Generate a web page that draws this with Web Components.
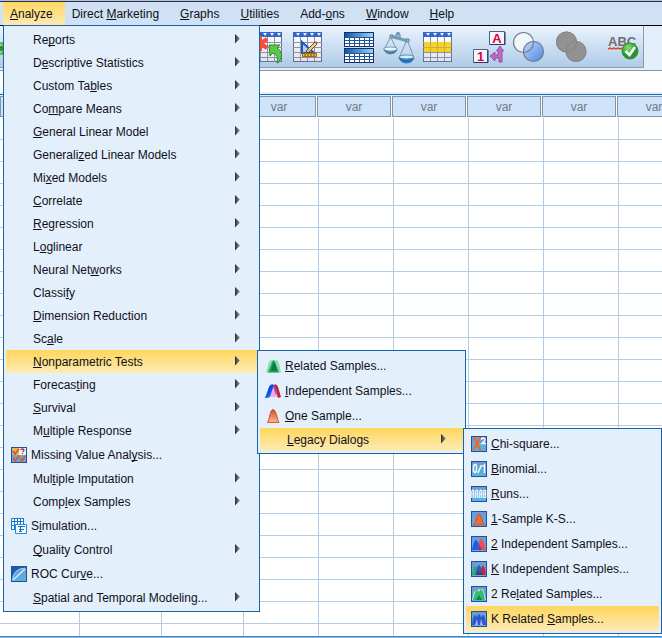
<!DOCTYPE html>
<html lang="en">
<head>
<meta charset="utf-8">
<title>Data Editor</title>
<style>
html, body { margin: 0; height: 100%; }
body { font: 12px/16px "Liberation Sans", Arial, sans-serif; color: #101018; overflow: hidden; background: #e4effc; }
</style>
</head>
<body>
<stat-app>
  <menu-bar slot="menubar">
    <menu-title label="_Analyze" open>
      <menu-panel style="--menu-width:257px">
        <menu-item label="Re_ports" arrow></menu-item>
        <menu-item label="D_escriptive Statistics" arrow></menu-item>
        <menu-item label="Custom Ta_bles" arrow></menu-item>
        <menu-item label="Co_mpare Means" arrow></menu-item>
        <menu-item label="_General Linear Model" arrow></menu-item>
        <menu-item label="Generali_zed Linear Models" arrow></menu-item>
        <menu-item label="Mi_xed Models" arrow></menu-item>
        <menu-item label="_Correlate" arrow></menu-item>
        <menu-item label="_Regression" arrow></menu-item>
        <menu-item label="L_oglinear" arrow></menu-item>
        <menu-item label="Neural Net_works" arrow></menu-item>
        <menu-item label="Classi_fy" arrow></menu-item>
        <menu-item label="_Dimension Reduction" arrow></menu-item>
        <menu-item label="Sc_ale" arrow></menu-item>
        <menu-item label="_Nonparametric Tests" arrow active>
          <menu-panel style="--menu-width:209px">
            <menu-item label="_Related Samples..." icon="related"></menu-item>
            <menu-item label="_Independent Samples..." icon="independent"></menu-item>
            <menu-item label="_One Sample..." icon="one"></menu-item>
            <menu-item label="_Legacy Dialogs" arrow active>
              <menu-panel style="--menu-width:199px">
                <menu-item label="_Chi-square..." icon="chi"></menu-item>
                <menu-item label="_Binomial..." icon="binomial"></menu-item>
                <menu-item label="_Runs..." icon="runs"></menu-item>
                <menu-item label="_1-Sample K-S..." icon="ks"></menu-item>
                <menu-item label="_2 Independent Samples..." icon="ind2"></menu-item>
                <menu-item label="_K Independent Samples..." icon="indk"></menu-item>
                <menu-item label="2 Re_lated Samples..." icon="rel2"></menu-item>
                <menu-item label="K Related _Samples..." icon="relk" active></menu-item>
              </menu-panel>
            </menu-item>
          </menu-panel>
        </menu-item>
        <menu-item label="Forecas_ting" arrow></menu-item>
        <menu-item label="_Survival" arrow></menu-item>
        <menu-item label="M_ultiple Response" arrow></menu-item>
        <menu-item label="Missing Value Anal_ysis..." icon="missing"></menu-item>
        <menu-item label="Mul_tiple Imputation" arrow></menu-item>
        <menu-item label="Comp_lex Samples" arrow></menu-item>
        <menu-item label="S_imulation..." icon="simulation"></menu-item>
        <menu-item label="_Quality Control" arrow></menu-item>
        <menu-item label="ROC Cur_ve..." icon="roc"></menu-item>
        <menu-item label="_Spatial and Temporal Modeling..." arrow></menu-item>
      </menu-panel>
    </menu-title>
    <menu-title label="Direct _Marketing"></menu-title>
    <menu-title label="_Graphs"></menu-title>
    <menu-title label="_Utilities"></menu-title>
    <menu-title label="Add-_ons"></menu-title>
    <menu-title label="_Window"></menu-title>
    <menu-title label="_Help"></menu-title>
  </menu-bar>
  <tool-bar slot="toolbar"></tool-bar>
  <data-grid></data-grid>
</stat-app>

<script>
const tile = '<rect x=".5" y=".5" width="15" height="15" fill="url(#t)" stroke="#254f9e"/>';
const defs = '<defs><linearGradient id="t" x2="0" y2="1"><stop stop-color="#7397cf"/><stop offset="1" stop-color="#56b5e2"/></linearGradient>' +
  '<linearGradient id="o" x2="0" y2="1"><stop stop-color="#c94f26"/><stop offset="1" stop-color="#ffb597"/></linearGradient>' +
  '<linearGradient id="b" x2="1" y2="1"><stop stop-color="#102f8c"/><stop offset=".5" stop-color="#0a50e8"/><stop offset="1" stop-color="#4d9aff"/></linearGradient></defs>';
const smallIcons = {
  related: '<path d="M1 14.5L4 4Q5 2 7 2h4q2 0 3 3l2 9.5z" fill="#8fdcae"/><path d="M3 14.5L7 4q1.5-3 3 0l4 10.5z" fill="#21a05a"/><path d="M6 13L8 5h2l2 8z" fill="#0d7d45"/>',
  independent: '<path d="M5 14L8 5q2-4 4 0l3 9z" fill="#eba9ef"/><path d="M0 15Q2 10 4 4Q6 0 9 2L7 8l-2 6q-2 1-5 1z" fill="url(#b)"/><path d="M8 3q3-4 5 1l3 10-3 1-2-8z" fill="#c42032"/><path d="M8 3l2 0 2 9-2-2z" fill="#a04dba"/>',
  one: '<path d="M2.5 14.5Q4 12 5 6.5Q6 1.5 8 1.5t3.5 5Q12.5 12 14 14.5z" fill="url(#o)" stroke="#ce592f"/>',
  chi: tile + '<path d="M2 3q3-1 4 4t4 7M9.500 2L2 14" fill="none" stroke="#f5671c" stroke-width="2"/><path d="M10.500 4q0-2 1.500-2t2 1.500q0 1.500-3 4H15" fill="none" stroke="#fff" stroke-width="1.300"/>',
  binomial: tile + '<path d="M2.5 5v5l1 1.5h1l1-1.5V5l-1-1.500h-1zM7 12l3.500-8M11.500 5.500L13.500 4v8" fill="none" stroke="#f4fbff" stroke-width="1.500"/>',
  runs: tile + '<path d="M.8 12V5l1-1 1 1v7M1 8h2M4.800 12V5l1-1 1 1v7M5 8h2M8.800 12V5l1-1 1 1v7M9 8h2M12.800 12V4.500h2V8h-2 2v3.500h-2" fill="none" stroke="#f4fbff" stroke-width="1.200"/>',
  ks: tile + '<path d="M2 14q3-2 4-8 .5-3 2-3t2.500 4q1 6 4 7z" fill="#ef6b32" stroke="#c14c28" stroke-width=".8"/>',
  ind2: tile + '<path d="M1 14Q3 4 5 4t5 10z" fill="#135eea"/><path d="M6 14Q8 3 10 3t5 11z" fill="#f14b50"/><path d="M6 14l2-6 3 6z" fill="#713eaa"/>',
  indk: tile + '<path d="M1 14Q2 5 4 5t4 9z" fill="#2baa71"/><path d="M9 14Q10 5 12 5t3 9z" fill="#ce2439"/><path d="M4.5 14Q6 4 8 4t3.5 10z" fill="#315bc2"/><path d="M5 14l2-5 2 5zM9 14l1-4 2 4z" fill="#632e55"/>',
  rel2: tile + '<path d="M1 14L3 6Q8 2 12 3l3 11z" fill="#c5efd9"/><path d="M2 14Q4 4 6 4t5 10zM6 14Q8 3 10 3t4 11z" fill="#36bc70"/><path d="M5 14l3-5 3 5z" fill="#16864b"/>',
  relk: tile + '<path d="M1 14Q2 4 4 4t4 10zM5 14Q6 3 8 3t3 11zM8 14Q10 4 12 4t3 10z" fill="#245bd0"/><path d="M4 14l2-6 1 6zM9 14l1-6 2 6z" fill="#c4a3ef"/>',
  missing: '<rect x=".5" y=".5" width="15" height="15" fill="#8fc1ed" stroke="#254f9e"/><path d="M1 1h7v7H1z" fill="#e0b657"/><path d="M1 8h14v7H1z" fill="#68a8cf"/><path d="M8 1h7v7H8z" fill="#fff5d2"/><path d="M2 4l2 3 4-5M2 11l2 3 4-5M9 11l2 3 3-5" fill="none" stroke="#e25335" stroke-width="1.800"/><path d="M10 3q0-1 1.500-1T13 3.500L11.500 5M11.500 6v1" fill="none" stroke="#81369e" stroke-width="1.300"/>',
  simulation: '<path d="M.5.5h12v11H.5zM.5 3.500h12M.5 7.500h12M3.500.5v11M6.500.5v11M9.500.5v11" fill="#fff" stroke="#1778cf"/><path d="M4.500 6.500h11v9h-11z" fill="#f7fcff" stroke="#238ade"/><path d="M7 8.500h7M9.500 9v5M8 11.500h5M8 13.500h3" stroke="#176dbd"/>',
  roc: '<rect x=".5" y=".5" width="15" height="15" fill="url(#t)" stroke="#254f9e"/><path d="M1 15Q2 2 15 2V1H1z" fill="#1e58aa"/><path d="M2 14L14 3" stroke="#c9f0ff" stroke-width="1.300"/><path d="M1.500 14Q2 3 14 2" fill="none" stroke="#9bd6f2"/>'
};
const table = '<rect x="1.5" y="1.5" width="28" height="29" fill="url(#wh)" stroke="#66718d"/><path d="M1 1h29v5H1z" fill="#3465c9"/><path d="M4 2h4l-2 3zM11 2h4l-2 3zM18 2h4l-2 3zM25 2h4l-2 3z" fill="#e6f0ff"/><path d="M1 11.500h29M1 16.500h29M1 21.500h29M1 26.500h29M8.500 6v24M15.500 6v24M22.500 6v24" stroke="#8b91a5"/>';
const toolDefs = '<defs><linearGradient id="wh" x2="0" y2="1"><stop stop-color="#fff"/><stop offset="1" stop-color="#e0e3f0"/></linearGradient><linearGradient id="bl"><stop stop-color="#0757ab"/><stop offset="1" stop-color="#9bd4fa"/></linearGradient><linearGradient id="vn" x2="1" y2="1"><stop stop-color="#c1dafb"/><stop offset="1" stop-color="#4b85e2"/></linearGradient><radialGradient id="gr" cx=".4" cy=".3"><stop stop-color="#8ee06e"/><stop offset="1" stop-color="#249331"/></radialGradient></defs>';
const split = y => `<rect x="2.5" y="${y}.5" width="29" height="14" fill="#fff" stroke="#1a2e66"/><path d="M3 ${y+1}h28v4H3z" fill="url(#bl)"/><path d="M3 ${y+5}.5h28M3 ${y+8}.5h28M3 ${y+11}.5h28M7.500 ${y+5}v9M12.500 ${y+5}v9M17.500 ${y+5}v9M22.500 ${y+5}v9M27.500 ${y+5}v9" stroke="#20549c"/>`;
const toolIcons = {
  goto: '<path d="M-2 12h5v11h-5z" fill="#72ea47" stroke="#279225"/><path d="M0 16h2v3H0z" fill="none" stroke="#344"/>',
  insert: table + '<path d="M8 5v15M2 8l13 9M15 8L2 17" stroke="#fa4b3c" stroke-width="4"/><path d="M17 14h11l-3 3q8 5 2 14-1 1-2 1 2-8-4-10l-3 3z" fill="#59ca43" stroke="#318a30"/>',
  variables: table + '<path d="M10 11v11h12z" fill="#a7d1ff" stroke="#2854b5" stroke-width="2"/><path d="M15 19l8-8 2 2-8 8-3 1z" fill="#f2cb83" stroke="#6b4c28"/><path d="M23 11l1-1 2 2-1 1z" fill="#e45b42"/><path d="M10.500 22.500h14v3h-14z" fill="#ffb72c" stroke="#a76b0c"/><path d="M13 23v2M16 23v2M19 23v2M22 23v2" stroke="#734800"/>',
  split: split(1) + split(17),
  weight: '<path d="M16 1v7M8 5l18 5" stroke="#6f9eb9" stroke-width="3"/><path d="M8 4h3v3H8zM24 8h3v3h-3zM14 3h4v4h-4z" fill="#98b9cc" stroke="#6288a2"/><path d="M8 7L2 19M9 7l6 12M24 11l-7 16M26 11l6 16" stroke="#7998ad"/><ellipse cx="8.500" cy="18" rx="7" ry="2" fill="#eaf7ff" stroke="#7998ad"/><path d="M2 19q6 4 13 0-2 4-6.500 4T2 19" fill="#3580bd" stroke="#5185aa"/><ellipse cx="24.500" cy="26" rx="7.500" ry="2" fill="#d4eeff" stroke="#648aa8"/><path d="M17 27q7 3 15 0-2 5-7.500 5T17 27" fill="#1770c4" stroke="#4982ae"/>',
  select: table + '<path d="M2 11h27v10H2z" fill="#f5d321"/><path d="M2 16.500h27M8.500 11v10M15.500 11v10M22.500 11v10" stroke="#c9aa4f"/>',
  labels: '<path d="M17.500.5h15v13h-15zM1.500 18.500h14v13h-14z" fill="#f3f6ff" stroke="#4d6381"/><path d="M18 13.500h15V1M2 31.500h14V19" fill="none" stroke="#26395d"/><text x="25" y="11.500" text-anchor="middle" font-size="13" font-weight="bold" fill="#df0044">A</text><text x="8.500" y="30" text-anchor="middle" font-size="13" font-weight="bold" fill="#df0044">1</text><path d="M28 15l3.500 5H30v11h-3v-4h-4v3l-5-5 5-4v3h3v-4h-1.500z" fill="#c36ac5" stroke="#873d91" stroke-width=".8"/>',
  sets: '<circle cx="11.500" cy="11.500" r="10" fill="#fff" fill-opacity=".65"/><circle cx="21.500" cy="20.500" r="10" fill="url(#vn)"/><g fill="none" stroke="#737b8b" stroke-width="1.200"><circle cx="11.500" cy="11.500" r="10"/><circle cx="21.500" cy="20.500" r="10"/></g>',
  allcases: '<g fill="#929292"><circle cx="14.500" cy="11" r="10.500"/><circle cx="24" cy="20.500" r="10.500"/></g><g fill="none" stroke="#858585"><circle cx="14.500" cy="11" r="10"/><circle cx="24" cy="20.500" r="10"/></g>',
  spelling: '<text x="6" y="15" font-size="13" font-weight="bold" fill="#707070">ABC</text><path d="M6 18l2-1 2 1 2-1 2 1 2-1 2 1 2-1 2 1 2-1" fill="none" stroke="#e04429" stroke-width="1.500"/><circle cx="28" cy="20" r="8" fill="url(#gr)" stroke="#2f8f35"/><path d="M23.500 20l4 4 5.500-8" fill="none" stroke="#fff" stroke-width="2.500"/>'
};
const mnemonic = s => s.replace(/_(.)/, '<u>$1</u>');
const buttonReset = 'button{appearance:none;border:0;margin:0;background:none;font:inherit;color:inherit;text-align:left;white-space:nowrap}u{text-decoration-skip-ink:none}';

class Base extends HTMLElement {
  connectedCallback() {
    if (!this.shadowRoot) this.attachShadow({ mode: 'open' }).innerHTML = this.view();
  }
}
customElements.define('stat-app', class extends Base {
  view() {
    return `<style>:host{display:flex;flex-direction:column;height:100vh;box-sizing:border-box;border-top:1px solid #b4bdd2;border-bottom:1px solid #9fb0c0}
      .edge{height:1px;background:#2b3350}.entry{height:21px;background:#fff;border-top:1px solid #8f959e;margin-top:2px}
      .rule{height:1px;background:#1467b3;margin:2px 0 1px}</style>
      <div class="edge"></div><slot name="menubar"></slot><slot name="toolbar"></slot><div class="entry"></div><div class="rule"></div><slot></slot>`;
  }
});
customElements.define('menu-bar', class extends Base {
  view() {
    return `<style>:host{display:block;position:relative;z-index:2;background:#cfe1f3;border-bottom:1px solid #000}
      nav{display:flex;padding-left:3px}</style><nav><slot></slot></nav>`;
  }
});
customElements.define('menu-title', class extends Base {
  view() {
    return `<style>${buttonReset}:host{display:block;position:relative}button{display:block;height:23px;padding:0 14px 0 7px}
      :host([open]) button{padding-right:12px;background:linear-gradient(#ffd75f,#fdeab4)}
      ::slotted(menu-panel){top:100%;left:0}</style>
      <button>${mnemonic(this.getAttribute('label'))}</button><slot></slot>`;
  }
});
customElements.define('menu-panel', class extends Base {
  view() {
    return `<style>:host{display:block;position:absolute;z-index:1;box-sizing:border-box;min-width:var(--menu-width);padding:2px;background:#e4effc;border:1px solid #1763ad}</style><slot></slot>`;
  }
});
customElements.define('menu-item', class extends Base {
  view() {
    const icon = this.getAttribute('icon');
    return `<style>${buttonReset}:host{display:block;position:relative}
      button{display:flex;align-items:center;gap:4px;width:100%;height:23px;padding:0 17px 0 27px}
      :host([icon]) button{height:25px;padding-left:5px}
      :host([active]) button{background:linear-gradient(#ffd65b,#fdebb7)}
      span{flex:1}svg{flex:none;display:block}
      ::slotted(menu-panel){top:0;left:100%}</style>
      <button>${icon ? `<svg width="16" height="16" viewBox="0 0 16 16">${defs}${smallIcons[icon]}</svg>` : ''}<span>${mnemonic(this.getAttribute('label'))}</span>${
        this.hasAttribute('arrow') ? '<svg width="5" height="11" viewBox="0 0 5 11"><defs><linearGradient id="a"><stop stop-color="#2c2c30"/><stop offset="1" stop-color="#999"/></linearGradient></defs><path d="M0 0l5 4.500L0 9.500z" fill="url(#a)"/></svg>' : ''}</button><slot></slot>`;
  }
});
customElements.define('tool-button', class extends Base {
  view() {
    const wide = this.getAttribute('icon') === 'spelling' ? 38 : 32;
    return `<style>${buttonReset}:host{display:block}button{display:block;padding:0}svg{display:block;overflow:visible}</style>
      <button aria-label="${this.getAttribute('icon')}"><svg width="${wide}" height="32" viewBox="0 0 ${wide} 32">${toolDefs}${toolIcons[this.getAttribute('icon')]}</svg></button>`;
  }
});
customElements.define('tool-bar', class extends Base {
  view() {
    const group = names => `<div class="group">${names.map(n => `<tool-button icon="${n}"></tool-button>`).join('')}</div>`;
    return `<style>:host{display:block;background:#e4effc}
      .bar{display:flex;gap:18px;height:42px;box-sizing:border-box;padding-top:5px;margin-right:18px;background:linear-gradient(#eaf3fd,#aecbe8);border-right:1px solid #8f99a8;border-bottom:1px solid #8f99a8}
      .group{display:flex;gap:8px}.group:first-child{width:234px}</style>
      <div class="bar">${group(['goto'])}${group(['insert', 'variables'])}${group(['split', 'weight', 'select'])}${group(['labels', 'sets', 'allcases'])}${group(['spelling'])}</div>`;
  }
});
customElements.define('data-grid', class extends Base {
  view() {
    const heads = ['', '', '', 'var', 'var', 'var', 'var', 'var', 'var'];
    return `<style>:host{display:block;flex:1;min-height:0;overflow:hidden;background:#fff;border-bottom:1px solid #1e90f5}
      table{table-layout:fixed;width:692px;border-collapse:separate;border-spacing:0}
      .a{width:78px}.b{width:82px}
      th{box-sizing:border-box;height:22px;padding:0 1px 1px 0;font-weight:normal;color:#747a84}
      th div{height:19px;line-height:21px;border:1px solid #8792a5;background:#cfe3fb}
      td{height:21px;padding:0;border-bottom:1px solid #b4cde6;background:linear-gradient(#b4cde6,#b4cde6) 1px 0/1px 100% no-repeat}
      td:first-child{background:none}</style>
      <table><colgroup><col class="a"><col class="b"><col class="b"><col span="6"></colgroup>
      <thead><tr>${heads.map(h => `<th><div>${h}</div></th>`).join('')}</tr></thead>
      <tbody>${('<tr>' + '<td></td>'.repeat(9) + '</tr>').repeat(24)}</tbody></table>`;
  }
});
</script>
</body>
</html>
